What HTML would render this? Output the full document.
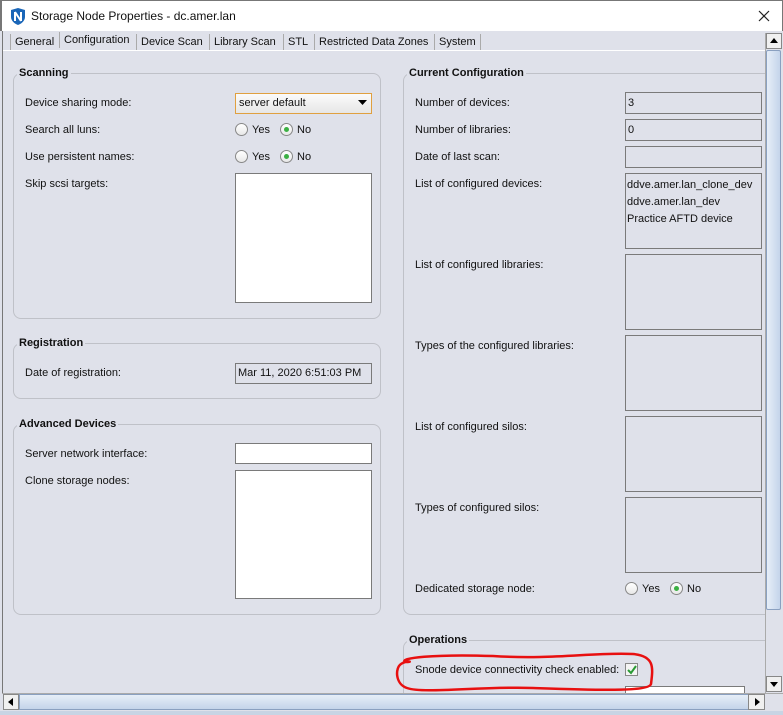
<!DOCTYPE html>
<html><head><style>
*{margin:0;padding:0;box-sizing:border-box}
body{width:783px;height:715px;overflow:hidden;background:#dfe1ea;font-family:"Liberation Sans",Arial,sans-serif;font-size:11px;color:#111;position:relative}
.a{position:absolute}
.t{position:absolute;white-space:nowrap;line-height:13px}
.panel{position:absolute;border:1px solid #bfc1c8;border-radius:8px}
.lg{position:absolute;font-weight:bold;background:#dfe1ea;padding:0 2px;line-height:13px;font-size:11px}
.fld{position:absolute;border:1px solid #7a7a7a;background:#dfe1ea}
.wf{position:absolute;border:1px solid #7a7a7a;background:#fff}
.rad{position:absolute;width:13px;height:13px;border-radius:50%;border:1px solid #888;background:linear-gradient(#fff,#e8e8e8)}
.rad.on::after{content:"";position:absolute;left:3px;top:3px;width:5px;height:5px;border-radius:50%;background:#3bb043}
.tab{position:absolute;top:34px;height:16px;line-height:16px;padding:0 4px;border-left:1px solid #aaa;font-size:11px}
</style></head><body>
<!-- title bar -->
<div class="a" style="left:0;top:0;width:783px;height:31px;background:#fff;border-left:2px solid #777;border-top:1px solid #777;border-right:1px solid #777"></div>
<svg class="a" style="left:10px;top:8px" width="16" height="17" viewBox="0 0 16 17"><path d="M1 2 L8 0 L15 2 L15 9 C15 13 11 16 8 17 C5 16 1 13 1 9Z" fill="#1a66b8"/><path d="M5 4 V13 M5 4 L11 13 M11 4 V13" stroke="#fff" stroke-width="2" fill="none"/></svg>
<div class="t" style="left:31px;top:10px;font-size:12px">Storage Node Properties - dc.amer.lan</div>
<svg class="a" style="left:758px;top:10px" width="12" height="12"><path d="M1 1L11 11M11 1L1 11" stroke="#222" stroke-width="1.2"/></svg>
<!-- tabs -->
<div class="a" style="left:2px;top:31px;width:763px;height:19px;background:#dfe1ea"></div>
<div class="a" style="left:2px;top:50px;width:763px;height:1px;background:#fff"></div>
<div class="tab" style="left:10px">General</div>
<div class="tab" style="left:59px;top:32px;background:#dfe1ea">Configuration</div>
<div class="tab" style="left:136px">Device Scan</div>
<div class="tab" style="left:209px">Library Scan</div>
<div class="tab" style="left:283px">STL</div>
<div class="tab" style="left:314px">Restricted Data Zones</div>
<div class="tab" style="left:434px;border-right:1px solid #aaa">System</div>
<div class="a" style="left:2px;top:31px;width:1px;height:680px;background:#777"></div>

<!-- Scanning -->
<div class="panel" style="left:13px;top:73px;width:368px;height:246px"></div>
<div class="lg" style="left:17px;top:67px">Scanning</div>
<div class="t" style="left:25px;top:97px">Device sharing mode:</div>
<div class="a" style="left:235px;top:93px;width:137px;height:21px;border:1px solid #e0a040;background:linear-gradient(#fbfbfb,#e6e6e6)"></div>
<div class="t" style="left:239px;top:97px">server default</div>
<svg class="a" style="left:358px;top:100px" width="9" height="6"><path d="M0 0H9L4.5 5Z" fill="#000"/></svg>
<div class="t" style="left:25px;top:124px">Search all luns:</div>
<div class="rad" style="left:235px;top:123px"></div><div class="t" style="left:252px;top:124px">Yes</div>
<div class="rad on" style="left:280px;top:123px"></div><div class="t" style="left:297px;top:124px">No</div>
<div class="t" style="left:25px;top:151px">Use persistent names:</div>
<div class="rad" style="left:235px;top:150px"></div><div class="t" style="left:252px;top:151px">Yes</div>
<div class="rad on" style="left:280px;top:150px"></div><div class="t" style="left:297px;top:151px">No</div>
<div class="t" style="left:25px;top:178px">Skip scsi targets:</div>
<div class="wf" style="left:235px;top:173px;width:137px;height:130px"></div>

<!-- Registration -->
<div class="panel" style="left:13px;top:343px;width:368px;height:56px"></div>
<div class="lg" style="left:17px;top:337px">Registration</div>
<div class="t" style="left:25px;top:367px">Date of registration:</div>
<div class="fld" style="left:235px;top:363px;width:137px;height:21px"></div>
<div class="t" style="left:238px;top:367px">Mar 11, 2020 6:51:03 PM</div>

<!-- Advanced -->
<div class="panel" style="left:13px;top:424px;width:368px;height:191px"></div>
<div class="lg" style="left:17px;top:418px">Advanced Devices</div>
<div class="t" style="left:25px;top:448px">Server network interface:</div>
<div class="wf" style="left:235px;top:443px;width:137px;height:21px"></div>
<div class="t" style="left:25px;top:475px">Clone storage nodes:</div>
<div class="wf" style="left:235px;top:470px;width:137px;height:129px"></div>

<!-- Current config -->
<div class="panel" style="left:403px;top:73px;width:363px;height:542px;border-right:none;border-radius:8px 0 0 8px"></div>
<div class="lg" style="left:407px;top:67px">Current Configuration</div>
<div class="t" style="left:415px;top:97px">Number of devices:</div>
<div class="fld" style="left:625px;top:92px;width:137px;height:22px"></div><div class="t" style="left:628px;top:97px">3</div>
<div class="t" style="left:415px;top:124px">Number of libraries:</div>
<div class="fld" style="left:625px;top:119px;width:137px;height:22px"></div><div class="t" style="left:628px;top:124px">0</div>
<div class="t" style="left:415px;top:151px">Date of last scan:</div>
<div class="fld" style="left:625px;top:146px;width:137px;height:22px"></div>
<div class="t" style="left:415px;top:178px">List of configured devices:</div>
<div class="fld" style="left:625px;top:173px;width:137px;height:76px"></div>
<div class="t" style="left:627px;top:177px;line-height:17px">ddve.amer.lan_clone_dev<br>ddve.amer.lan_dev<br>Practice AFTD device</div>
<div class="t" style="left:415px;top:259px">List of configured libraries:</div>
<div class="fld" style="left:625px;top:254px;width:137px;height:76px"></div>
<div class="t" style="left:415px;top:340px">Types of the configured libraries:</div>
<div class="fld" style="left:625px;top:335px;width:137px;height:76px"></div>
<div class="t" style="left:415px;top:421px">List of configured silos:</div>
<div class="fld" style="left:625px;top:416px;width:137px;height:76px"></div>
<div class="t" style="left:415px;top:502px">Types of configured silos:</div>
<div class="fld" style="left:625px;top:497px;width:137px;height:76px"></div>
<div class="t" style="left:415px;top:583px">Dedicated storage node:</div>
<div class="rad" style="left:625px;top:582px"></div><div class="t" style="left:642px;top:583px">Yes</div>
<div class="rad on" style="left:670px;top:582px"></div><div class="t" style="left:687px;top:583px">No</div>

<!-- Operations -->
<div class="a" style="left:403px;top:640px;width:363px;height:60px;border-left:1px solid #bfc1c8;border-top:1px solid #bfc1c8;border-radius:8px 0 0 0"></div>
<div class="lg" style="left:407px;top:634px">Operations</div>
<div class="t" style="left:415px;top:664px">Snode device connectivity check enabled:</div>
<div class="a" style="left:625px;top:663px;width:13px;height:13px;border:1px solid #888;background:#f4f4f4"></div>
<svg class="a" style="left:627px;top:665px" width="10" height="10"><path d="M1 5L4 8L9 1" stroke="#2a9a34" stroke-width="2" fill="none"/></svg>
<div class="wf" style="left:625px;top:686px;width:120px;height:10px"></div>
<svg class="a" style="left:393px;top:648px" width="268" height="52"><path d="M12 14 C 6 10, 40 6, 100 8 C 160 12, 200 4, 240 6 C 262 8, 260 20, 258 36 C 256 44, 200 42, 140 40 C 90 38, 30 46, 14 40 C 2 36, 2 20, 8 16 C 14 12, 22 14, 12 14" stroke="#e81010" stroke-width="2.5" fill="none"/></svg>

<!-- vertical scrollbar -->
<div class="a" style="left:765px;top:33px;width:17px;height:660px;background:#dfe1ea;border-left:1px solid #aaa"></div>
<div class="a" style="left:766px;top:33px;width:16px;height:16px;border:1px solid #888;background:#f0f0f0"></div>
<svg class="a" style="left:770px;top:38px" width="8" height="5"><path d="M0 5H8L4 0Z"/></svg>
<div class="a" style="left:766px;top:50px;width:15px;height:560px;border:1px solid #8aa0c0;border-radius:2px;background:linear-gradient(90deg,#e6eef8,#c4d4ea)"></div>
<div class="a" style="left:766px;top:676px;width:16px;height:16px;border:1px solid #888;background:#f0f0f0"></div>
<svg class="a" style="left:770px;top:682px" width="8" height="5"><path d="M0 0H8L4 5Z"/></svg>
<!-- horizontal scrollbar -->
<div class="a" style="left:2px;top:693px;width:781px;height:22px;background:#dfe1ea;border-top:1px solid #aaa"></div>
<div class="a" style="left:3px;top:694px;width:16px;height:16px;border:1px solid #888;background:#f0f0f0"></div>
<svg class="a" style="left:8px;top:698px" width="5" height="8"><path d="M5 0V8L0 4Z"/></svg>
<div class="a" style="left:19px;top:694px;width:333px;height:16px;border:1px solid #8aa0c0;background:linear-gradient(#e6eef8,#c4d4ea)"></div>
<div class="a" style="left:19px;top:694px;width:730px;height:16px;border:1px solid #8aa0c0;background:linear-gradient(#e6eef8,#c4d4ea)"></div>
<div class="a" style="left:748px;top:694px;width:17px;height:16px;border:1px solid #888;background:#f0f0f0"></div>
<svg class="a" style="left:755px;top:698px" width="5" height="8"><path d="M0 0V8L5 4Z"/></svg>
<div class="a" style="left:0;top:711px;width:783px;height:4px;background:#c8d4e4"></div>
</body></html>
